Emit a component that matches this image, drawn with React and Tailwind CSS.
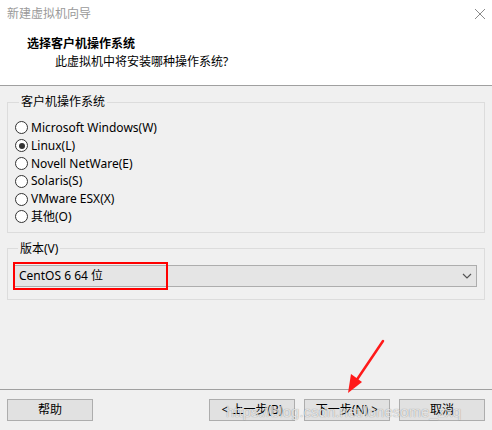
const osOptions = [
  { id: "win", label: "Microsoft Windows(W)" },
  { id: "linux", label: "Linux(L)" },
  { id: "novell", label: "Novell NetWare(E)" },
  { id: "solaris", label: "Solaris(S)" },
  { id: "esx", label: "VMware ESX(X)" },
  { id: "other", label: "其他(O)" },
];

const Radio = ({ checked, label }) => (
  <label className="flex items-center h-[17.8px] gap-[3px]">
    <span className="w-[13px] h-[13px] rounded-full border border-[#333333] bg-white flex items-center justify-center">
      {checked && <span className="w-[6px] h-[6px] rounded-full bg-[#333333]" />}
    </span>
    <span>{label}</span>
  </label>
);

const WizButton = ({ children }) => (
  <button className="w-[86px] h-[22px] border border-[#adadad] bg-[#e1e1e1] text-[12px] text-black flex items-center justify-center">
    {children}
  </button>
);

export default function App() {
  return (
    <div
      className="relative w-[492px] h-[430px] bg-[#f0f0f0] flex flex-col text-[12px] text-black overflow-hidden"
      style={{ fontFamily: '"Noto Sans", "Noto Sans CJK SC", sans-serif' }}
    >
      {/* header */}
      <div className="bg-white h-[85px] flex flex-col">
        <div className="h-[28px] flex items-center justify-between pl-[7px] pr-[5px]">
          <span className="text-[#9a9a9a]">新建虚拟机向导</span>
          <svg width="12" height="12" viewBox="0 0 12 12" className="mr-[1px]">
            <path d="M1 1 L11 11 M11 1 L1 11" stroke="#8a8a8a" strokeWidth="1" fill="none" />
          </svg>
        </div>
        <div className="pl-[27px] pt-[8px] leading-[16px] font-bold">选择客户机操作系统</div>
        <div className="pl-[55px] pt-[2px] leading-[16px]">此虚拟机中将安装哪种操作系统?</div>
      </div>
      <div className="h-px bg-[#a0a0a0]" />

      {/* guest os */}
      <fieldset className="mx-[7px] mt-[8px] border border-[#dcdcdc] px-[7px] pt-[9px] pb-[6px]">
        <legend className="ml-[4px] px-[2px] leading-[16px]">客户机操作系统</legend>
        {osOptions.map((os) => (
          <Radio key={os.id} label={os.label} checked={os.id === "linux"} />
        ))}
      </fieldset>

      {/* version */}
      <fieldset className="mx-[7px] mt-[8px] border border-[#dcdcdc] pl-[6px] pr-[7px] pt-[8px] pb-[12px]">
        <legend className="ml-[4px] px-[2px] leading-[16px]">版本(V)</legend>
        <div className="relative h-[22px] border border-[#adadad] bg-[#e5e5e5] flex items-center justify-between pl-[4px] pr-[4px]">
          <span>CentOS 6 64 位</span>
          <svg width="10" height="6" viewBox="0 0 10 6">
            <path d="M1 1 L5 5 L9 1" stroke="#555555" strokeWidth="1.2" fill="none" />
          </svg>
          <div className="absolute left-[-2px] top-[-4px] w-[155px] h-[28px] border-2 border-[#ff0000]" />
        </div>
      </fieldset>

      <div className="flex-1" />

      {/* footer */}
      <div className="h-px bg-[#a0a0a0]" />
      <div className="h-[40px] flex items-start pt-[9px] px-[7px]">
        <WizButton>帮助</WizButton>
        <div className="flex-1" />
        <div className="flex gap-[9px]">
          <WizButton>&lt; 上一步(B)</WizButton>
          <WizButton>下一步(N) &gt;</WizButton>
          <WizButton>取消</WizButton>
        </div>
      </div>

      {/* annotation arrow */}
      <svg className="absolute left-0 top-0 pointer-events-none" width="492" height="430">
        <path d="M383 341 L356 381" stroke="#ff1a1a" strokeWidth="2.5" fill="none" strokeLinecap="round" />
        <path d="M348 393 L351 374 L362 382 Z" fill="#ff1a1a" />
      </svg>

      {/* watermark */}
      <div
        className="absolute left-[226px] top-[402px] text-[15px] leading-[20px] text-white/75 pointer-events-none whitespace-nowrap"
        style={{ fontFamily: '"Liberation Sans", sans-serif', textShadow: "0 0 1px rgba(0,0,0,0.45)" }}
      >
        https://blog.csdn.net/lonesome_zxq
      </div>
    </div>
  );
}
